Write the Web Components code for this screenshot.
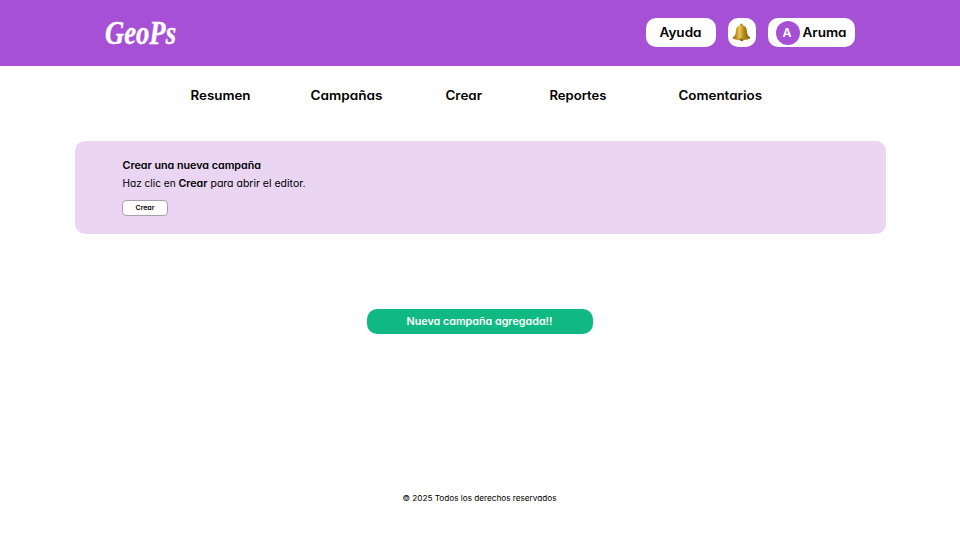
<!DOCTYPE html>
<html lang="es"><head><meta charset="utf-8"><title>GeoPs</title>
<style>html,body{margin:0;background:#fff}body{font-family:Inter,"Open Sans",sans-serif;color:#000}</style></head>
<body><geo-app></geo-app>
<script>
const define=(name,html,init)=>customElements.define(name,class extends HTMLElement{
  connectedCallback(){
    if(this.shadowRoot)return;
    const t=document.createElement('template');t.innerHTML=html;
    this.attachShadow({mode:'open'}).append(t.content.cloneNode(true));
    if(init)init(this,this.shadowRoot);
  }
});
// A single line of text, its glyphs widened to a given advance width.
define('fit-text',`<style>
:host{display:block;flex:none;white-space:nowrap;line-height:1.5;font-feature-settings:"cv11"}
span{display:inline-block;transform-origin:0 50%}
</style><span><slot></slot></span>`,(el,root)=>{
  const w=+el.getAttribute('width'),s=root.querySelector('span');
  el.style.width=w+'px';
  el.style.fontSize=el.getAttribute('size')+'px';
  el.style.fontWeight=el.getAttribute('weight')||600;
  s.style.transform='translate(-.5px,'+(el.getAttribute('drop')||-.2)+'px) scaleX('+(w/s.getBoundingClientRect().width)+')';
});
define('geo-logo',`<style>
:host{display:block;width:72px;height:44px;color:#fff}
svg{display:block;overflow:visible}
text{font:italic bold 34px "Liberation Serif",serif;fill:currentColor;stroke:currentColor;stroke-width:.4px}
</style><svg width="72" height="44" viewBox="0 0 72 44"><text x="0" y="33.4" textLength="71" lengthAdjust="spacingAndGlyphs">GeoPs</text></svg>`);
define('pill-button',`<style>
:host{display:flex;box-sizing:border-box;flex:none;height:29px;border-radius:10px;background:#fff;align-items:center;justify-content:center}
</style><slot></slot>`);
define('bell-icon',`<style>:host,svg{display:block}</style>
<svg width="19" height="19" viewBox="0 0 19 19"><defs>
<linearGradient id="g"><stop offset="0" stop-color="#8d6710"/><stop offset=".25" stop-color="#c99e2b"/><stop offset=".4" stop-color="#e8c750"/><stop offset=".62" stop-color="#b98a18"/><stop offset="1" stop-color="#76520b"/></linearGradient></defs>
<circle cx="9.3" cy="2.1" r="1.5" fill="#b88b20"/>
<path d="M9.5 2.3C5.8 2.3 4.1 4.6 3.9 8C3.7 11.3 3.3 12.7 1 14.3C.3 15 1 16 2.8 16.3C7 17 12 17 16 16.3C17.8 16 18.7 15.2 17.9 14.3C15.6 12.8 15.2 11.2 14.9 8C14.6 4.6 13.1 2.3 9.5 2.3Z" fill="url(#g)"/>
<path d="M1 14.9Q9 16.3 18 14.9Q17 16.5 9.5 16.8Q2 16.6 1 14.9Z" fill="#b4892a"/>
<ellipse cx="9.7" cy="16.9" rx="1.8" ry="1.3" fill="#8d6818"/></svg>`);
define('user-avatar',`<style>
:host{display:flex;flex:none;width:24px;height:24px;border-radius:50%;background:#a651d5;color:#fff;align-items:center;justify-content:center}
</style><slot></slot>`);
define('app-header',`<style>
:host{display:flex;box-sizing:border-box;height:65.5px;padding:0 105px;background:#a651d5;align-items:center;justify-content:space-between}
div{display:flex;gap:12px;color:#000}
.help{width:69.4px}.bell{width:28px}.user{width:87.5px;gap:3px}
</style><geo-logo></geo-logo><div>
<pill-button class="help"><fit-text width="42" size="12.8">Ayuda</fit-text></pill-button>
<pill-button class="bell"><bell-icon></bell-icon></pill-button>
<pill-button class="user"><user-avatar><fit-text width="9" size="12">A</fit-text></user-avatar><fit-text width="44" size="12.8">Aruma</fit-text></pill-button></div>`);
define('app-nav',`<style>
:host{display:flex;height:61px;align-items:center;padding-left:190.5px}
fit-text:nth-of-type(2){margin-left:60px}fit-text:nth-of-type(3){margin-left:63.5px}fit-text:nth-of-type(4){margin-left:67px}fit-text:nth-of-type(5){margin-left:72px}
</style><fit-text width="60" size="12.8">Resumen</fit-text><fit-text width="72" size="12.8">Campañas</fit-text><fit-text width="36.5" size="12.8">Crear</fit-text><fit-text width="57" size="12.8">Reportes</fit-text><fit-text width="83.5" size="12.8">Comentarios</fit-text>`);
define('outline-button',`<style>
:host{display:flex;box-sizing:border-box;width:46px;height:16px;margin-left:-.5px;border:1px solid #a99eae;border-radius:4px;background:#fff;align-items:center;justify-content:center}
</style><slot></slot>`);
define('create-card',`<style>
:host{display:flex;flex-direction:column;box-sizing:border-box;width:810.5px;height:92.5px;margin:14.5px 0 0 75px;padding:17px 47.5px 0;border-radius:10px;background:#ead5f3}
p{display:flex;margin:2px 0 9px}
</style><fit-text width="138.5" size="10.2">Crear una nueva campaña</fit-text>
<p><fit-text width="56" size="10.2" weight="400" drop=".5">Haz clic en&nbsp;</fit-text><fit-text width="29" size="10.2" drop=".5">Crear</fit-text><fit-text width="98" size="10.2" weight="400" drop=".5">&nbsp;para abrir el editor.</fit-text></p>
<outline-button><fit-text width="19" size="6.5" drop=".5">Crear</fit-text></outline-button>`);
define('status-toast',`<style>
:host{display:flex;width:226px;height:25px;margin:75.5px auto 0;border-radius:10px;background:#10b981;color:#fff;align-items:center;justify-content:center}
</style><slot></slot>`);
define('app-footer',`<style>:host{display:flex;justify-content:center;margin-top:158px}</style><slot></slot>`);
define('geo-app',`<style>:host{display:flex;flex-direction:column;width:960px;height:538px;overflow:hidden;background:#fff}</style>
<app-header></app-header><app-nav></app-nav><create-card></create-card>
<status-toast><fit-text width="146" size="10.2">Nueva campaña agregada!!</fit-text></status-toast>
<app-footer><fit-text width="154" size="7.8" weight="400" drop="1.4">© 2025 Todos los derechos reservados</fit-text></app-footer>`);
</script></body></html>
